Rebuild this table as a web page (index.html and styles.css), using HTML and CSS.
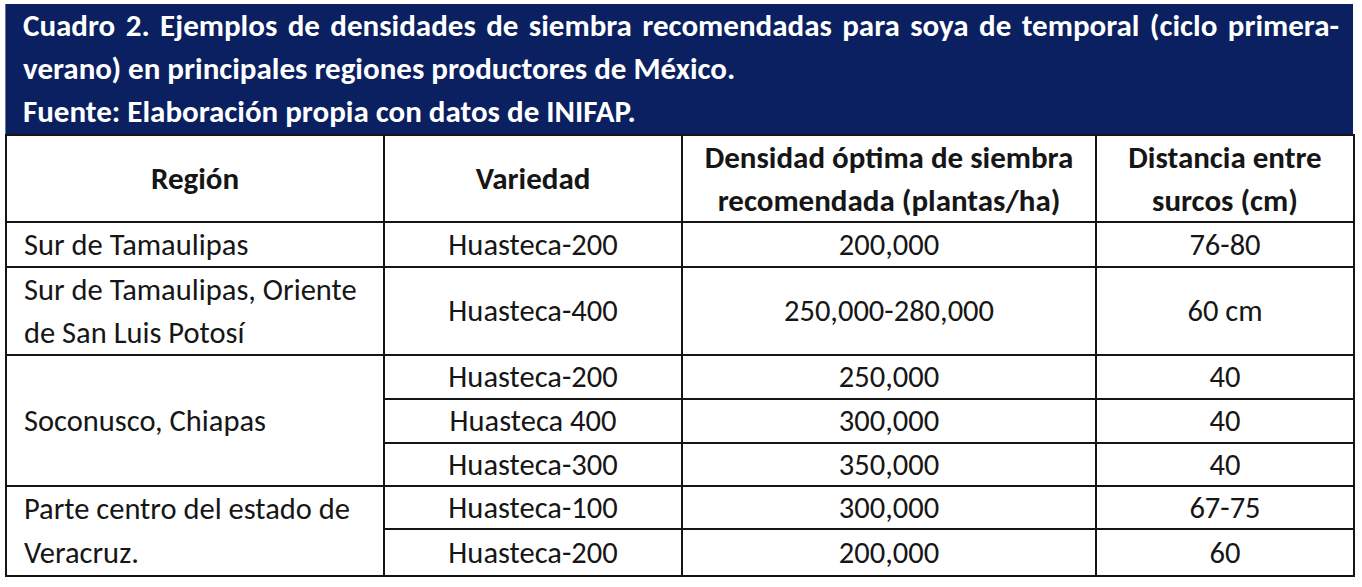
FILE: index.html
```html
<!DOCTYPE html>
<html lang="es">
<head>
<meta charset="utf-8">
<title>Cuadro 2</title>
<link rel="stylesheet" href="styles.css">
</head>
<body>
<div class="sheet">
  <div class="caption">Cuadro 2. Ejemplos de densidades de siembra recomendadas para soya de temporal (ciclo primera-verano) en principales regiones productores de México.<br>Fuente: Elaboración propia con datos de INIFAP.</div>
  <table class="data">
    <colgroup>
      <col class="c-region">
      <col class="c-var">
      <col class="c-dens">
      <col class="c-dist">
    </colgroup>
    <thead>
      <tr class="head">
        <th>Región</th>
        <th>Variedad</th>
        <th>Densidad óptima de siembra<br>recomendada (plantas/ha)</th>
        <th>Distancia entre<br>surcos (cm)</th>
      </tr>
    </thead>
    <tbody>
      <tr class="first">
        <td class="region">Sur de Tamaulipas</td>
        <td>Huasteca-200</td>
        <td>200,000</td>
        <td>76-80</td>
      </tr>
      <tr class="tall">
        <td class="region">Sur de Tamaulipas, Oriente<br>de San Luis Potosí</td>
        <td>Huasteca-400</td>
        <td>250,000-280,000</td>
        <td>60 cm</td>
      </tr>
      <tr>
        <td class="region" rowspan="3">Soconusco, Chiapas</td>
        <td>Huasteca-200</td>
        <td>250,000</td>
        <td>40</td>
      </tr>
      <tr>
        <td>Huasteca 400</td>
        <td>300,000</td>
        <td>40</td>
      </tr>
      <tr class="short">
        <td>Huasteca-300</td>
        <td>350,000</td>
        <td>40</td>
      </tr>
      <tr class="short">
        <td class="region wide" rowspan="2">Parte centro del estado de<br>Veracruz.</td>
        <td>Huasteca-100</td>
        <td>300,000</td>
        <td>67-75</td>
      </tr>
      <tr class="last">
        <td>Huasteca-200</td>
        <td>200,000</td>
        <td>60</td>
      </tr>
    </tbody>
  </table>
</div>
</body>
</html>
```
FILE: styles.css
```css
html, body {
  margin: 0;
  padding: 0;
  background: #ffffff;
}

body {
  font-family: "Carlito", "Lato", "Open Sans", sans-serif;
  color: #161616;
}

.sheet {
  width: 1348px;
  margin: 4px 0 0 5px;
}

.caption {
  background: #0b2060;
  color: #ffffff;
  font-weight: bold;
  font-size: 31px;
  line-height: 43px;
  text-align: justify;
  padding: 0 14px 1px 17px;
  height: 130px;
  box-sizing: border-box;
  border-left: 1px solid #6a7390;
}

.data {
  width: 1348px;
  border-collapse: collapse;
  table-layout: fixed;
  font-size: 30.5px;
}

.c-region { width: 378px; }
.c-var { width: 298px; }
.c-dens { width: 414px; }
.c-dist { width: 258px; }

.data th,
.data td {
  border: 2px solid #151515;
  padding: 0;
  text-align: center;
  vertical-align: middle;
  line-height: 40px;
  font-weight: normal;
}

.data th {
  font-weight: bold;
  font-size: 31px;
  height: 85px;
  line-height: 42.5px;
}

.data td {
  height: 42px;
}

.data td.region {
  text-align: left;
  padding-left: 17px;
  line-height: 43px;
}

.data td.region.wide {
  line-height: 44px;
}

.data tr.first td {
  height: 40px;
}

.data tr.short td {
  height: 41px;
}

.data tr.tall td {
  height: 86px;
}

.data tr.last td {
  height: 44px;
}
```
